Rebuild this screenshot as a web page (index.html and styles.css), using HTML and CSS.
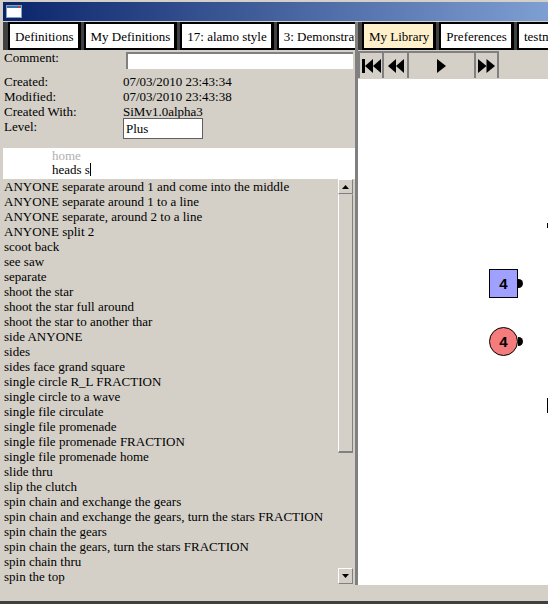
FILE: index.html
```html
<!DOCTYPE html>
<html>
<head>
<meta charset="utf-8">
<link rel="stylesheet" href="styles.css">
</head>
<body>
<div class="window">
  <div class="titlebar">
    <svg class="appicon" width="16" height="13" viewBox="0 0 16 13"><rect x="0.5" y="0.5" width="15" height="12" fill="#fff" stroke="#8aa0c0"/><rect x="1" y="1" width="14" height="2" fill="#3a6ea5"/><rect x="12" y="1" width="2" height="2" fill="#d04020"/></svg>
  </div>
  <div class="panes">
    <div class="left">
      <div class="tabs">
        <div class="tab">Definitions</div>
        <div class="tab">My Definitions</div>
        <div class="tab">17: alamo style</div>
        <div class="tab">3: Demonstration</div>
      </div>
      <div class="props">
        <div class="row comment-row"><span class="label">Comment:</span><div class="comment-input"></div></div>
        <div class="row"><span class="label">Created:</span><span>07/03/2010 23:43:34</span></div>
        <div class="row"><span class="label">Modified:</span><span>07/03/2010 23:43:38</span></div>
        <div class="row"><span class="label">Created With:</span><span>SiMv1.0alpha3</span></div>
        <div class="row"><span class="label">Level:</span><div class="combo">Plus</div></div>
      </div>
      <div class="search">
        <div class="hint">home</div>
        <div class="typed">heads s<span class="caret"></span></div>
      </div>
      <div class="listwrap">
        <ul class="list">
          <li>ANYONE separate around 1 and come into the middle</li>
          <li>ANYONE separate around 1 to a line</li>
          <li>ANYONE separate, around 2 to a line</li>
          <li>ANYONE split 2</li>
          <li>scoot back</li>
          <li>see saw</li>
          <li>separate</li>
          <li>shoot the star</li>
          <li>shoot the star full around</li>
          <li>shoot the star to another thar</li>
          <li>side ANYONE</li>
          <li>sides</li>
          <li>sides face grand square</li>
          <li>single circle R_L FRACTION</li>
          <li>single circle to a wave</li>
          <li>single file circulate</li>
          <li>single file promenade</li>
          <li>single file promenade FRACTION</li>
          <li>single file promenade home</li>
          <li>slide thru</li>
          <li>slip the clutch</li>
          <li>spin chain and exchange the gears</li>
          <li>spin chain and exchange the gears, turn the stars FRACTION</li>
          <li>spin chain the gears</li>
          <li>spin chain the gears, turn the stars FRACTION</li>
          <li>spin chain thru</li>
          <li>spin the top</li>
        </ul>
        <div class="scrollbar">
          <div class="sb-btn up"><svg width="7" height="4" viewBox="0 0 7 4"><polygon points="3.5,0 7,4 0,4" fill="#000"/></svg></div>
          <div class="thumb"></div>
          <div class="track"></div>
          <div class="sb-btn down"><svg width="7" height="4" viewBox="0 0 7 4"><polygon points="0,0 7,0 3.5,4" fill="#000"/></svg></div>
        </div>
      </div>
    </div>
    <div class="splitter"></div>
    <div class="right">
      <div class="tabs">
        <div class="tab active">My Library</div>
        <div class="tab">Preferences</div>
        <div class="tab">testmode</div>
      </div>
      <div class="media">
        <div class="mb b1"><svg width="19" height="14" viewBox="0 0 19 14"><rect x="0" y="0" width="3" height="14"/><polygon points="3,7 11,0 11,14"/><polygon points="11,7 19,0 19,14"/></svg></div>
        <div class="mb b2"><svg width="16" height="14" viewBox="0 0 16 14"><polygon points="0,7 8,0 8,14"/><polygon points="8,7 16,0 16,14"/></svg></div>
        <div class="mb b3"><svg width="9" height="14" viewBox="0 0 9 14"><polygon points="0,0 9,7 0,14"/></svg></div>
        <div class="mb b4"><svg width="17" height="14" viewBox="0 0 17 14"><polygon points="0,0 8.5,7 0,14"/><polygon points="8.5,0 17,7 8.5,14"/></svg></div>
      </div>
      <div class="canvas">
        <div class="mark m1"></div>
        <div class="dancer square">4</div>
        <div class="nub n1"></div>
        <div class="dancer circle">4</div>
        <div class="nub n2"></div>
        <div class="mark m2"></div>
      </div>
    </div>
  </div>
  <div class="status"></div>
</div>
</body>
</html>
```

FILE: styles.css
```css
* { box-sizing: border-box; }
html, body { margin: 0; padding: 0; }
body {
  width: 548px;
  height: 604px;
  overflow: hidden;
  background: #d4d0c8;
  font-family: "Liberation Serif", "Times New Roman", serif;
  font-size: 13px;
  color: #000;
}
.window {
  height: 604px;
  display: flex;
  flex-direction: column;
  border-bottom: 3px solid #404040;
}
.titlebar {
  height: 19px;
  margin: 2px 0 1px 3px;
  background: linear-gradient(to right, #0a246a, #7e9fd2);
  display: flex;
  align-items: center;
  padding-left: 3px;
  flex: none;
}
.appicon { display: block; }
.panes { display: flex; height: 563px; flex: none; }
.left { width: 355px; display: flex; flex-direction: column; flex: none; }
.splitter { width: 3px; background: #808080; flex: none; }
.right { width: 190px; display: flex; flex-direction: column; flex: none; }

.tabs {
  display: flex;
  gap: 3px;
  height: 28px;
  background: #404040;
  padding-left: 5px;
  overflow: hidden;
  flex: none;
}
.left .tabs { margin-left: 3px; }
.right .tabs { padding-left: 4px; }
.tab {
  flex: none;
  background: #fff;
  border: 2px solid #000;
  border-right-width: 3px;
  padding: 1px 4px 0 5px;
  line-height: 23px;
  white-space: nowrap;
}
.tab.active { background: #fff0cc; }

.props { height: 98px; flex: none; }
.row { display: flex; line-height: 15px; height: 15px; }
.label { width: 123px; padding-left: 4px; flex: none; }
.comment-row { height: 24px; }
.comment-input {
  flex: 1;
  margin: 2px 2px 0 3px;
  height: 17px;
  background: #fff;
  border-top: 2px solid #808080;
  border-left: 2px solid #808080;
}
.combo {
  width: 80px;
  height: 21px;
  margin-top: -1px;
  border: 1px solid #606060;
  background: #fff;
  padding-left: 2px;
  line-height: 19px;
}

.search {
  margin-left: 3px;
  height: 31px;
  background: #fff;
  padding: 1px 0 0 49px;
  line-height: 14px;
  flex: none;
}
.hint { color: #b0b0b0; }
.caret {
  display: inline-block;
  width: 1px;
  height: 13px;
  background: #000;
  vertical-align: -2px;
}

.listwrap { flex: 1; display: flex; min-height: 0; }
.list {
  flex: 1;
  margin: 0;
  padding: 0 0 0 4px;
  list-style: none;
  line-height: 15px;
  overflow: hidden;
  white-space: nowrap;
}
.scrollbar {
  width: 15px;
  margin-right: 2px;
  height: 405px;
  display: flex;
  flex-direction: column;
  flex: none;
}
.sb-btn {
  height: 15px;
  flex: none;
  background: #d4d0c8;
  border: 1px solid;
  border-color: #fff #808080 #808080 #fff;
  display: flex;
  align-items: center;
  justify-content: center;
}
.sb-btn svg { display: block; }
.sb-btn.down { height: 16px; }
.thumb {
  height: 259px;
  flex: none;
  border: 1px solid;
  border-color: #d4d0c8 #808080 #808080 #fff;
  border-bottom-width: 2px;
}
.track { flex: 1; }

.media {
  height: 29px;
  display: flex;
  padding-top: 1px;
  flex: none;
}
.mb {
  height: 27px;
  border-top: 2px solid #808080;
  border-left: 2px solid #808080;
  display: flex;
  align-items: center;
  justify-content: center;
  background: #d4d0c8;
}
.mb svg { display: block; fill: #000; }
.b1 { width: 24px; }
.b2 { width: 25px; }
.b3 { width: 67px; }
.b4 { width: 25px; border-right: 2px solid #808080; }

.canvas {
  flex: 1;
  background: #fff;
  position: relative;
  overflow: hidden;
}
.dancer {
  position: absolute;
  left: 131px;
  width: 29px;
  height: 29px;
  border: 1px solid #000;
  font-family: "Liberation Sans", Arial, sans-serif;
  font-weight: bold;
  font-size: 15px;
  line-height: 27px;
  text-align: center;
}
.square { top: 190px; background: #a0a0ff; }
.circle { top: 248px; background: #f47c7c; border-radius: 50%; }
.nub {
  position: absolute;
  left: 160px;
  width: 5px;
  height: 9px;
  background: #000;
  border-radius: 0 5px 5px 0;
}
.n1 { top: 200px; }
.n2 { top: 258px; }
.mark { position: absolute; left: 189px; width: 1px; background: #000; }
.m1 { top: 144px; height: 5px; }
.m2 { top: 319px; height: 15px; }

.status { flex: 1; }
```
